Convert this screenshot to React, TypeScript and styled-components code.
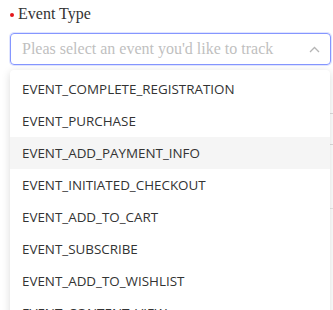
import React from 'react';
import styled, { createGlobalStyle } from 'styled-components';

const GlobalStyle = createGlobalStyle`
  html, body {
    margin: 0;
    padding: 0;
    background: #fff;
    width: 333px;
    height: 310px;
    overflow: hidden;
  }
`;

const Page = styled.div`
  position: relative;
  width: 333px;
  height: 310px;
  overflow: hidden;
  font-family: "Liberation Serif", "Times New Roman", serif;
`;

const Field = styled.div`
  padding: 4px 4px 0 10px;
`;

const Label = styled.div`
  display: flex;
  align-items: center;
  gap: 4px;
  height: 20px;
  font-size: 16px;
  color: #333;
`;

const Dot = styled.span`
  width: 4px;
  height: 4px;
  border-radius: 50%;
  background: #e4161b;
  margin-top: 2px;
`;

const Select = styled.div`
  margin-top: 9px;
  height: 30px;
  border: 1px solid #8596ff;
  border-radius: 4px;
  box-shadow: 0 0 0 1px rgba(133, 150, 255, 0.25);
  display: flex;
  align-items: center;
  justify-content: space-between;
  padding: 0 10px 0 11px;
  width: 298px;
`;

const Placeholder = styled.span`
  font-size: 16px;
  color: #bfbfbf;
`;

const Behind = styled.div`
  margin-top: 48px;
  padding-left: 10px;
`;

const BehindInput = styled.div`
  height: 30px;
  border: 1px solid #dcdcdc;
  border-radius: 4px;
  width: 340px;
`;

const Divider = styled.div`
  margin-top: 63px;
  border-top: 1px solid #e6e6e6;
`;

const Menu = styled.ul`
  position: absolute;
  left: 10px;
  top: 70px;
  width: 320px;
  margin: 0;
  padding: 3px 0 0;
  list-style: none;
  background: #fff;
  border-radius: 4px;
  box-shadow: 0 2px 8px rgba(0, 0, 0, 0.15);
  font-family: "Open Sans", "Noto Sans", sans-serif;
`;

const Item = styled.li<{ $active?: boolean }>`
  height: 32px;
  line-height: 32px;
  padding-left: 12px;
  font-size: 13.4px;
  color: #333;
  background: ${p => (p.$active ? '#f5f5f5' : 'transparent')};
`;

const events = [
  'EVENT_COMPLETE_REGISTRATION',
  'EVENT_PURCHASE',
  'EVENT_ADD_PAYMENT_INFO',
  'EVENT_INITIATED_CHECKOUT',
  'EVENT_ADD_TO_CART',
  'EVENT_SUBSCRIBE',
  'EVENT_ADD_TO_WISHLIST',
  'EVENT_CONTENT_VIEW',
];

const App: React.FC = () => {
  return (
    <Page>
      <GlobalStyle />
      <Field>
        <Label>
          <Dot />
          Event Type
        </Label>
        <Select>
          <Placeholder>Pleas select an event you'd like to track</Placeholder>
          <svg width="11" height="7" viewBox="0 0 11 7" fill="none">
            <path d="M1 6 L5.5 1.5 L10 6" stroke="#b5b5b5" strokeWidth="1.3" />
          </svg>
        </Select>
      </Field>
      <Behind>
        <BehindInput />
        <Divider />
      </Behind>
      <Menu>
        {events.map((e, i) => (
          <Item key={e} $active={i === 2}>
            {e}
          </Item>
        ))}
      </Menu>
    </Page>
  );
};

export default App;
